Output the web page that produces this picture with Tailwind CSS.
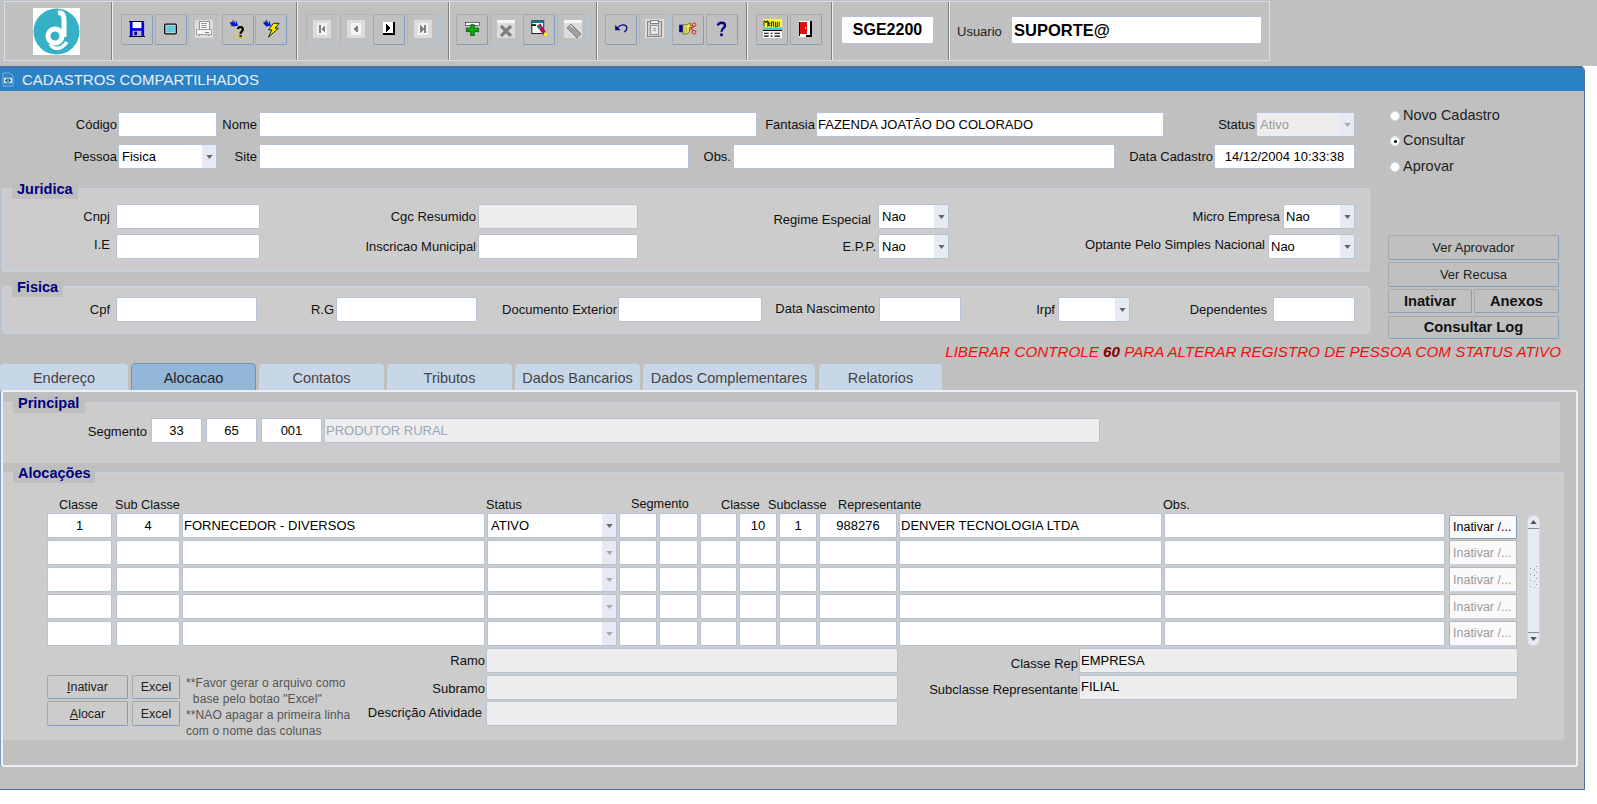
<!DOCTYPE html>
<html lang="pt">
<head>
<meta charset="utf-8">
<script src="https://cdn.jsdelivr.net/npm/@tailwindcss/browser@4"></script>
<title>SGE2200</title>
</head>
<body class="bg-white font-['Liberation_Sans',Arial,sans-serif] text-[13px] text-[#111]">
<div class="w-[1597px] h-[804px] overflow-hidden">

<!-- toolbar -->
<div class="h-[66px] bg-[#c0c0c0] pt-[1px] pl-[4px]">
  <div class="flex h-[60px] w-[1266px] border border-[#d3dfec]">
    <div class="w-[107px] shrink-0 border-r border-r-[#808080] shadow-[1px_0_0_#eeeeee] pl-[28px] pt-[6px]">
      <svg width="47" height="47" viewBox="0 0 47 47" class="block"><rect width="47" height="47" fill="#fff"/><circle cx="23.5" cy="23.5" r="23" fill="#35b0c4"/><path d="M25 5C30 4 31 8 31 12V29" fill="none" stroke="#fff" stroke-width="5"/><circle cx="22" cy="28" r="7" fill="none" stroke="#fff" stroke-width="5"/><path d="M17 36C21 43 29 41 34 34" fill="none" stroke="#fff" stroke-width="3.5"/></svg>
    </div>
    <div class="w-[185px] shrink-0 border-r border-r-[#808080] shadow-[1px_0_0_#eeeeee] pl-[9px] pt-[12px] flex gap-[1.5px]">
      <div class="w-[32px] h-[31px] pb-[2px] border border-[#a8a8a8] border-r-[#7f9dc0] border-b-[#7f9dc0] rounded-[2px] flex items-center justify-center">
        <svg width="16" height="16" viewBox="0 0 18 18"><path d="M1 1H16L17 2V17H1Z" fill="#0000e6"/><rect x="4" y="1" width="10" height="7" fill="#fff"/><rect x="4" y="11" width="10" height="6" fill="#b8b8b8"/><rect x="6" y="12" width="3" height="4" fill="#0000a0"/><path d="M0 0H17V1H0ZM0 17H18V18H0Z" fill="#000040"/></svg>
      </div>
      <div class="w-[32px] h-[31px] pb-[2px] border border-[#a8a8a8] border-r-[#7f9dc0] border-b-[#7f9dc0] rounded-[2px] flex items-center justify-center">
        <svg width="15" height="12" viewBox="0 0 16 14"><rect x="0.5" y="0.5" width="15" height="13" rx="2" fill="#000"/><rect x="2" y="2" width="12" height="10" fill="#dfe8e8"/><rect x="3" y="3" width="10" height="8" fill="#64c8d8"/></svg>
      </div>
      <div class="w-[32px] h-[31px] pb-[2px] border border-[#b4b4b4] border-r-[#b4c8de] border-b-[#b4c8de] rounded-[2px] flex items-center justify-center">
        <svg width="18" height="18" viewBox="0 0 20 20" shape-rendering="crispEdges"><rect width="20" height="20" fill="#dcdcdc"/><rect x="5" y="2" width="11" height="9" fill="#fff" stroke="#8c8c8c"/><path d="M7 4H13M7 6H13M7 8H13" stroke="#8c8c8c"/><rect x="2" y="11" width="16" height="5" fill="#f4f4f4" stroke="#9a9a9a"/><rect x="11" y="13" width="4" height="1" fill="#808080"/><path d="M4 17H6M14 17H16" stroke="#808080"/></svg>
      </div>
      <div class="w-[32px] h-[31px] pb-[2px] border border-[#a8a8a8] border-r-[#7f9dc0] border-b-[#7f9dc0] rounded-[2px] flex items-center justify-center">
        <svg width="18" height="18" viewBox="0 0 22 22"><path d="M1 3L9 1L11 7L5 8Z" fill="#0018e0"/><path d="M1 3L5 8L3 7Z" fill="#000"/><path d="M6 1L9 1L8 5Z" fill="#40d8e8"/><rect x="4" y="0" width="2" height="2" fill="#e02020"/><path d="M11 11C11 8 17 8 17 11C17 14 14 14 14 17" fill="none" stroke="#000" stroke-width="2.6"/><rect x="12.8" y="18.5" width="2.8" height="2.8" fill="#000"/><path d="M9 12V21M20 12V21M9 21H20M18 9H21" stroke="#f0e020" stroke-width="1.4" stroke-dasharray="1.2 1.2" fill="none"/></svg>
      </div>
      <div class="w-[32px] h-[31px] pb-[2px] border border-[#a8a8a8] border-r-[#7f9dc0] border-b-[#7f9dc0] rounded-[2px] flex items-center justify-center">
        <svg width="18" height="18" viewBox="0 0 22 22"><path d="M1 3L9 1L11 7L5 8Z" fill="#0018e0"/><path d="M6 1L9 1L8 5Z" fill="#40d8e8"/><rect x="4" y="0" width="2" height="2" fill="#a02020"/><path d="M14 4L21 4L16 10H20L8 21L12 12H8Z" fill="#ffe800" stroke="#000" stroke-width="1"/></svg>
      </div>
    </div>
    <div class="w-[152px] shrink-0 border-r border-r-[#808080] shadow-[1px_0_0_#eeeeee] pl-[9px] pt-[12px] flex gap-[1.5px]">
      <div class="w-[32px] h-[31px] pb-[2px] border border-[#b4b4b4] border-r-[#b4c8de] border-b-[#b4c8de] rounded-[2px] flex items-center justify-center">
        <svg width="18" height="18" viewBox="0 0 19 19" shape-rendering="crispEdges"><rect width="19" height="19" fill="#dcdcdc"/><rect x="4" y="3" width="11" height="13" fill="#f4f4f4"/><rect x="6" y="5" width="2" height="9" fill="#808080"/><path d="M13 5V14L9 9.5Z" fill="#808080"/></svg>
      </div>
      <div class="w-[32px] h-[31px] pb-[2px] border border-[#b4b4b4] border-r-[#b4c8de] border-b-[#b4c8de] rounded-[2px] flex items-center justify-center">
        <svg width="18" height="18" viewBox="0 0 19 19" shape-rendering="crispEdges"><rect width="19" height="19" fill="#dcdcdc"/><rect x="4" y="3" width="11" height="13" fill="#f4f4f4"/><path d="M12 5V14L7 9.5Z" fill="#808080"/></svg>
      </div>
      <div class="w-[32px] h-[31px] pb-[2px] border border-[#a8a8a8] border-r-[#7f9dc0] border-b-[#7f9dc0] rounded-[2px] flex items-center justify-center">
        <svg width="12" height="13" viewBox="0 0 12 13" shape-rendering="crispEdges"><rect width="12" height="13" fill="#fff"/><rect x="10" width="2" height="13" fill="#000"/><rect y="11" width="12" height="2" fill="#000"/><path d="M3 2V10L8 6Z" fill="#000"/></svg>
      </div>
      <div class="w-[32px] h-[31px] pb-[2px] border border-[#b4b4b4] border-r-[#b4c8de] border-b-[#b4c8de] rounded-[2px] flex items-center justify-center">
        <svg width="18" height="18" viewBox="0 0 19 19" shape-rendering="crispEdges"><rect width="19" height="19" fill="#dcdcdc"/><rect x="4" y="3" width="11" height="13" fill="#f4f4f4"/><path d="M6 5V14L11 9.5Z" fill="#808080"/><rect x="11" y="5" width="2" height="9" fill="#808080"/></svg>
      </div>
    </div>
    <div class="w-[148px] shrink-0 border-r border-r-[#808080] shadow-[1px_0_0_#eeeeee] pl-[7px] pt-[12px] flex gap-[1.5px]">
      <div class="w-[32px] h-[31px] pb-[2px] border border-[#a8a8a8] border-r-[#7f9dc0] border-b-[#7f9dc0] rounded-[2px] flex items-center justify-center">
        <svg width="15" height="14" viewBox="0 0 16 16"><rect y="0.5" width="16" height="3.5" fill="#fff" stroke="#000" stroke-width="0.6"/><path d="M6 3H10V7H15V11H10V16H6V11H1V7H6Z" fill="#00b000" stroke="#004000" stroke-width="0.8"/></svg>
      </div>
      <div class="w-[32px] h-[31px] pb-[2px] border border-[#b4b4b4] border-r-[#b4c8de] border-b-[#b4c8de] rounded-[2px] flex items-center justify-center">
        <svg width="18" height="18" viewBox="0 0 18 18"><rect width="18" height="18" fill="#dcdcdc"/><rect width="18" height="3" fill="#f6f6f6"/><path d="M4 6L14 16M14 6L4 16" stroke="#808080" stroke-width="3.2"/></svg>
      </div>
      <div class="w-[32px] h-[31px] pb-[2px] border border-[#a8a8a8] border-r-[#7f9dc0] border-b-[#7f9dc0] rounded-[2px] flex items-center justify-center">
        <svg width="17" height="17" viewBox="0 0 20 20"><rect x="1" y="1" width="14" height="15" fill="#fff" stroke="#000"/><rect x="1" y="1" width="14" height="2.5" fill="#008080"/><rect x="1" y="5" width="5" height="2" fill="#000"/><path d="M7 7L11 4L18 15L15 18Z" fill="#c00060"/><path d="M7 8L10 6L12 9L9 11Z" fill="#00a040"/><path d="M15 15L18 14L19 19L15 18Z" fill="#fff000"/></svg>
      </div>
      <div class="w-[32px] h-[31px] pb-[2px] border border-[#b4b4b4] border-r-[#b4c8de] border-b-[#b4c8de] rounded-[2px] flex items-center justify-center">
        <svg width="18" height="18" viewBox="0 0 18 18"><rect width="18" height="18" fill="#dcdcdc"/><rect width="18" height="3" fill="#f6f6f6"/><path d="M3 8L7 4L17 14L13 18Z" fill="#a0a0a0" stroke="#808080"/><path d="M6 5L9 8" stroke="#f0f0f0"/></svg>
      </div>
    </div>
    <div class="w-[150px] shrink-0 border-r border-r-[#808080] shadow-[1px_0_0_#eeeeee] pl-[8px] pt-[12px] flex gap-[1.5px]">
      <div class="w-[32px] h-[31px] pb-[2px] border border-[#a8a8a8] border-r-[#7f9dc0] border-b-[#7f9dc0] rounded-[2px] flex items-center justify-center">
        <svg width="13" height="9" viewBox="0 0 14 10"><path d="M0 1V7H6Z" fill="#000080"/><path d="M3 4C6 0 12 0 13 4C13 6 12 8 10 9" fill="none" stroke="#000080" stroke-width="1.3"/></svg>
      </div>
      <div class="w-[32px] h-[31px] pb-[2px] border border-[#b4b4b4] border-r-[#b4c8de] border-b-[#b4c8de] rounded-[2px] flex items-center justify-center">
        <svg width="19" height="19" viewBox="0 0 20 20" shape-rendering="crispEdges"><rect width="20" height="20" fill="#dcdcdc"/><rect x="3" y="3" width="14" height="15" fill="#d0d0d0" stroke="#808080"/><rect x="6" y="2" width="8" height="3" fill="#f0f0f0" stroke="#808080"/><rect x="6" y="7" width="8" height="9" fill="#e8e8e8" stroke="#909090"/><path d="M8 10H12M8 12H12" stroke="#909090"/></svg>
      </div>
      <div class="w-[32px] h-[31px] pb-[2px] border border-[#a8a8a8] border-r-[#7f9dc0] border-b-[#7f9dc0] rounded-[2px] flex items-center justify-center">
        <svg width="18" height="13" viewBox="0 0 19 14"><rect x="0" y="3" width="4" height="8" fill="#0000a0"/><path d="M4 3H9L11 1H12V4H15V6H11V11L8 13H4Z" fill="#f0f040" stroke="#404040" stroke-width="0.7"/><path d="M6 5V12M8 5V12" stroke="#808040" stroke-width="0.6"/><circle cx="16" cy="3" r="2" fill="none" stroke="#d02020"/><circle cx="16" cy="11" r="2" fill="none" stroke="#d02020"/><path d="M15 5L12 9M15 9L12 5" stroke="#d02020"/></svg>
      </div>
      <div class="w-[32px] h-[31px] pb-[2px] border border-[#a8a8a8] border-r-[#7f9dc0] border-b-[#7f9dc0] rounded-[2px] flex items-center justify-center">
        <svg width="11" height="16" viewBox="0 0 12 18"><path d="M2 5C2 1 10 1 10 5C10 8 6 8 6 12" fill="none" stroke="#000080" stroke-width="2.6"/><rect x="4.5" y="14" width="3" height="3" fill="#000080"/></svg>
      </div>
    </div>
    <div class="w-[85px] shrink-0 border-r border-r-[#808080] shadow-[1px_0_0_#eeeeee] pl-[9px] pt-[12px] flex gap-[1.5px]">
      <div class="w-[32px] h-[31px] pb-[2px] border border-[#a8a8a8] border-r-[#7f9dc0] border-b-[#7f9dc0] rounded-[2px] flex items-center justify-center">
        <svg width="19" height="19" viewBox="0 0 20 20"><rect width="20" height="9" fill="#ffff30"/><path d="M1 8V2H2L3 4L4 2H5V8M7 3H6V7H8M6 5H8M9 8V3H11V8M13 3V8H15V3M17 3V8" stroke="#000" fill="none" stroke-width="0.9"/><rect y="9" width="20" height="2" fill="#20d8e0"/><rect y="11" width="20" height="9" fill="#fff"/><path d="M0 12H20M1 15H6M8 15H10M12 15H18M1 18H6M8 18H10M12 18H18" stroke="#000" stroke-width="1.2"/></svg>
      </div>
      <div class="w-[32px] h-[31px] pb-[2px] border border-[#a8a8a8] border-r-[#7f9dc0] border-b-[#7f9dc0] rounded-[2px] flex items-center justify-center">
        <svg width="13" height="16" viewBox="0 0 14 18" shape-rendering="crispEdges"><rect width="14" height="18" fill="#fff"/><rect x="12" width="2" height="18" fill="#000"/><rect x="7" y="16" width="7" height="2" fill="#000"/><rect x="1" y="1" width="8" height="14" fill="#e01010"/><rect x="0" y="1" width="1" height="16" fill="#000"/><rect x="6" y="7" width="1" height="2" fill="#ffff00"/></svg>
      </div>
    </div>
    <div class="w-[117px] shrink-0 border-r border-r-[#808080] shadow-[1px_0_0_#eeeeee] pl-[9px] pt-[14px]">
      <div class="w-[93px] h-[28px] bg-white border border-[#b6c3d4] rounded-[2px] flex items-center justify-center font-bold text-[16px] text-black">SGE2200</div>
    </div>
    <div class="flex-1 pl-[8px] pt-[14px] flex items-start">
      <span class="w-[54px] shrink-0 pt-[8px] leading-[16px] text-[#222]">Usuario</span>
      <div class="w-[251px] h-[28px] bg-white border border-[#b6c3d4] rounded-[2px] flex items-center pl-[2px] font-bold text-[16.5px] text-black">SUPORTE@</div>
    </div>
  </div>
</div>

<!-- main window -->
<div class="w-[1585px] h-[724px] bg-[#c0c0c0] border-r border-b border-[#4f6f9f] rounded-tr-[5px] overflow-hidden">
  <div class="h-[25px] bg-[#2b82c4] border-t-2 border-t-[#4a6f9c] flex items-center">
    <svg width="13" height="17" viewBox="0 0 14 16" class="ml-[2px]"><path d="M1 1H8L12 4V15H1Z" fill="#2b82c4" stroke="#7db3de"/><rect x="2" y="6" width="9" height="6" fill="#d8e6f4"/><path d="M3 9L6 6V12ZM10 9L7 6V12Z" fill="#1f5f98"/></svg>
    <span class="ml-[7px] pt-[1px] text-[15px] text-[#e8eff7]">CADASTROS COMPARTILHADOS</span>
  </div>

  <div class="flex h-[250px]">
    <!-- left column -->
    <div class="w-[1372px] shrink-0 pt-[21px]">
      <div class="flex h-[25px] items-center">
        <span class="w-[117px] shrink-0 text-right">Código</span>
        <div class="ml-[1px] w-[99px] h-full bg-white border border-[#b6c3d4] rounded-[2px]"></div>
        <span class="w-[40px] shrink-0 text-right">Nome</span>
        <div class="ml-[2px] w-[498px] h-full bg-white border border-[#b6c3d4] rounded-[2px]"></div>
        <span class="w-[58px] shrink-0 text-right">Fantasia</span>
        <div class="ml-[1px] w-[348px] h-full bg-white border border-[#b6c3d4] rounded-[2px] flex items-center px-[1px] text-black">FAZENDA JOATÃO DO COLORADO</div>
        <span class="w-[91px] shrink-0 text-right">Status</span>
        <div class="ml-[1px] w-[99px] h-full bg-[#ededed] border border-[#b6c3d4] rounded-[2px] flex items-center pl-[3px] text-[#9a9a9a] relative">Ativo
          <span class="absolute right-0 top-0 bottom-0 w-[14px] bg-[#e6ebf3] flex items-center justify-center"><svg width="7" height="4" viewBox="0 0 8 5"><path d="M0 0H8L4 5Z" fill="#a8a8a8"/></svg></span>
        </div>
      </div>
      <div class="flex h-[25px] mt-[7px] items-center">
        <span class="w-[117px] shrink-0 text-right">Pessoa</span>
        <div class="ml-[1px] w-[99px] h-full bg-white border border-[#b6c3d4] rounded-[2px] flex items-center pl-[3px] text-black relative">Fisica
          <span class="absolute right-0 top-0 bottom-0 w-[14px] bg-[#e6ebf3] flex items-center justify-center"><svg width="7" height="4" viewBox="0 0 8 5"><path d="M0 0H8L4 5Z" fill="#666"/></svg></span>
        </div>
        <span class="w-[40px] shrink-0 text-right">Site</span>
        <div class="ml-[2px] w-[430px] h-full bg-white border border-[#b6c3d4] rounded-[2px]"></div>
        <span class="w-[42px] shrink-0 text-right">Obs.</span>
        <div class="ml-[2px] w-[382px] h-full bg-white border border-[#b6c3d4] rounded-[2px]"></div>
        <span class="w-[98px] shrink-0 text-right">Data Cadastro</span>
        <div class="ml-[1px] w-[141px] h-full bg-white border border-[#b6c3d4] rounded-[2px] flex items-center justify-center text-black">14/12/2004 10:33:38</div>
      </div>

      <!-- Juridica -->
      <div class="relative ml-[2px] mt-[19px] w-[1368px] h-[84px] bg-[#cccccc] border border-[#c6d5e6] rounded-[3px] pt-[15px]">
        <span class="absolute left-[9px] top-[-6px] h-[16px] w-[66px] bg-[#bebebe] pl-[5px] font-bold text-[14.5px] leading-[12px] text-[#000080]">Juridica</span>
        <div class="flex h-[25px] items-center">
          <span class="w-[107px] shrink-0 text-right">Cnpj</span>
          <div class="ml-[6px] w-[144px] h-full bg-white border border-[#b6c3d4] rounded-[2px]"></div>
          <span class="w-[216px] shrink-0 text-right">Cgc Resumido</span>
          <div class="ml-[2px] w-[160px] h-full bg-[#ededed] border border-[#b6c3d4] rounded-[2px]"></div>
          <span class="w-[233px] shrink-0 text-right mt-[6px]">Regime Especial</span>
          <div class="ml-[7px] w-[71px] h-full bg-white border border-[#b6c3d4] rounded-[2px] flex items-center pl-[3px] text-black relative">Nao
            <span class="absolute right-0 top-0 bottom-0 w-[14px] bg-[#e6ebf3] flex items-center justify-center"><svg width="7" height="4" viewBox="0 0 8 5"><path d="M0 0H8L4 5Z" fill="#666"/></svg></span>
          </div>
          <span class="w-[331px] shrink-0 text-right">Micro Empresa</span>
          <div class="ml-[3px] w-[72px] h-full bg-white border border-[#b6c3d4] rounded-[2px] flex items-center pl-[2px] text-black relative">Nao
            <span class="absolute right-0 top-0 bottom-0 w-[14px] bg-[#e6ebf3] flex items-center justify-center"><svg width="7" height="4" viewBox="0 0 8 5"><path d="M0 0H8L4 5Z" fill="#666"/></svg></span>
          </div>
        </div>
        <div class="flex h-[25px] mt-[5px] items-center">
          <span class="w-[107px] shrink-0 text-right -mt-[3px]">I.E</span>
          <div class="ml-[6px] w-[144px] h-full bg-white border border-[#b6c3d4] rounded-[2px]"></div>
          <span class="w-[216px] shrink-0 text-right">Inscricao Municipal</span>
          <div class="ml-[2px] w-[160px] h-full bg-white border border-[#b6c3d4] rounded-[2px]"></div>
          <span class="w-[238px] shrink-0 text-right">E.P.P.</span>
          <div class="ml-[2px] w-[71px] h-full bg-white border border-[#b6c3d4] rounded-[2px] flex items-center pl-[3px] text-black relative">Nao
            <span class="absolute right-0 top-0 bottom-0 w-[14px] bg-[#e6ebf3] flex items-center justify-center"><svg width="7" height="4" viewBox="0 0 8 5"><path d="M0 0H8L4 5Z" fill="#666"/></svg></span>
          </div>
          <span class="w-[316px] shrink-0 text-right -mt-[3px]">Optante Pelo Simples Nacional</span>
          <div class="ml-[3px] w-[87px] h-full bg-white border border-[#b6c3d4] rounded-[2px] flex items-center pl-[2px] text-black relative">Nao
            <span class="absolute right-0 top-0 bottom-0 w-[14px] bg-[#e6ebf3] flex items-center justify-center"><svg width="7" height="4" viewBox="0 0 8 5"><path d="M0 0H8L4 5Z" fill="#666"/></svg></span>
          </div>
        </div>
      </div>

      <!-- Fisica -->
      <div class="relative ml-[2px] mt-[14px] w-[1368px] h-[48px] bg-[#cccccc] border border-[#c6d5e6] rounded-[3px] pt-[10px]">
        <span class="absolute left-[9px] top-[-6px] h-[16px] w-[51px] bg-[#bebebe] pl-[5px] font-bold text-[14.5px] leading-[12px] text-[#000080]">Fisica</span>
        <div class="flex h-[25px] items-center">
          <span class="w-[107px] shrink-0 text-right">Cpf</span>
          <div class="ml-[6px] w-[141px] h-full bg-white border border-[#b6c3d4] rounded-[2px]"></div>
          <span class="w-[77px] shrink-0 text-right">R.G</span>
          <div class="ml-[2px] w-[141px] h-full bg-white border border-[#b6c3d4] rounded-[2px]"></div>
          <span class="w-[140px] shrink-0 text-right">Documento Exterior</span>
          <div class="ml-[1px] w-[144px] h-full bg-white border border-[#b6c3d4] rounded-[2px]"></div>
          <span class="w-[113px] shrink-0 text-right -mt-[2px]">Data Nascimento</span>
          <div class="ml-[4px] w-[82px] h-full bg-white border border-[#b6c3d4] rounded-[2px]"></div>
          <span class="w-[94px] shrink-0 text-right">Irpf</span>
          <div class="ml-[3px] w-[72px] h-full bg-white border border-[#b6c3d4] rounded-[2px] relative">
            <span class="absolute right-0 top-0 bottom-0 w-[14px] bg-[#e6ebf3] flex items-center justify-center"><svg width="7" height="4" viewBox="0 0 8 5"><path d="M0 0H8L4 5Z" fill="#666"/></svg></span>
          </div>
          <span class="w-[137px] shrink-0 text-right">Dependentes</span>
          <div class="ml-[6px] w-[82px] h-full bg-white border border-[#b6c3d4] rounded-[2px]"></div>
        </div>
      </div>
    </div>

    <!-- right column -->
    <div class="pl-[16px] pt-[12px] w-[190px]">
      <div class="pl-[2px] h-[25.5px] flex items-center gap-[3px] text-[14.5px] text-[#222]"><span class="w-[10px] h-[10px] rounded-full bg-white border border-[#d8dfe8]"></span>Novo Cadastro</div>
      <div class="pl-[2px] h-[25.5px] flex items-center gap-[3px] text-[14.5px] text-[#222]"><span class="w-[10px] h-[10px] rounded-full bg-white border border-[#d8dfe8] flex items-center justify-center"><span class="w-[3px] h-[3px] rounded-full bg-black"></span></span>Consultar</div>
      <div class="pl-[2px] h-[25.5px] flex items-center gap-[3px] text-[14.5px] text-[#222]"><span class="w-[10px] h-[10px] rounded-full bg-white border border-[#d8dfe8]"></span>Aprovar</div>
      <div class="mt-[55.5px] w-[171px] flex flex-col">
        <div class="h-[25px] pt-[1px] border border-[#a8a8a8] border-r-[#7f9dc0] border-b-[#7f9dc0] rounded-[2px] flex items-center justify-center text-[13px] text-[#222]">Ver Aprovador</div>
        <div class="mt-[2px] h-[25px] pt-[1px] border border-[#a8a8a8] border-r-[#7f9dc0] border-b-[#7f9dc0] rounded-[2px] flex items-center justify-center text-[13px] text-[#222]">Ver Recusa</div>
        <div class="mt-[2px] h-[24px] flex gap-[2px]">
          <div class="w-[84px] border border-[#a8a8a8] border-r-[#7f9dc0] border-b-[#7f9dc0] rounded-[2px] flex items-center justify-center font-bold text-[14.7px] text-[#111]">Inativar</div>
          <div class="w-[85px] border border-[#a8a8a8] border-r-[#7f9dc0] border-b-[#7f9dc0] rounded-[2px] flex items-center justify-center font-bold text-[14.7px] text-[#111]">Anexos</div>
        </div>
        <div class="mt-[3px] h-[23px] border border-[#a8a8a8] border-r-[#7f9dc0] border-b-[#7f9dc0] rounded-[2px] flex items-center justify-center font-bold text-[14.7px] text-[#111]">Consultar Log</div>
      </div>
    </div>
  </div>

  <!-- message -->
  <div class="h-[22px] w-[1561px] flex items-center justify-end italic text-[15.2px] text-[#f01010]">LIBERAR CONTROLE&nbsp;<b class="text-[#800000]">60</b>&nbsp;PARA ALTERAR REGISTRO DE PESSOA COM STATUS ATIVO</div>

  <!-- tabs -->
  <div class="flex h-[27px] items-end">
    <div class="w-[128px] h-[26px] bg-[#c8d7e8] rounded-t-[4px] flex items-center justify-center pt-[3px] text-[14.5px] text-[#444]">Endereço</div>
    <div class="ml-[3px] w-[125px] h-[27px] bg-[#92b7d9] border border-b-0 border-[#6f93b8] rounded-t-[5px] flex items-center justify-center pt-[3px] text-[14.5px] text-[#222]">Alocacao</div>
    <div class="ml-[3px] w-[125px] h-[26px] bg-[#c8d7e8] rounded-t-[4px] flex items-center justify-center pt-[3px] text-[14.5px] text-[#444]">Contatos</div>
    <div class="ml-[3px] w-[125px] h-[26px] bg-[#c8d7e8] rounded-t-[4px] flex items-center justify-center pt-[3px] text-[14.5px] text-[#444]">Tributos</div>
    <div class="ml-[3px] w-[125px] h-[26px] bg-[#c8d7e8] rounded-t-[4px] flex items-center justify-center pt-[3px] text-[14.5px] text-[#444]">Dados Bancarios</div>
    <div class="ml-[3px] w-[172px] h-[26px] bg-[#c8d7e8] rounded-t-[4px] flex items-center justify-center pt-[3px] text-[14.5px] text-[#444]">Dados Complementares</div>
    <div class="ml-[4px] w-[123px] h-[26px] bg-[#c8d7e8] rounded-t-[4px] flex items-center justify-center pt-[3px] text-[14.5px] text-[#444]">Relatorios</div>
  </div>

  <!-- tab content -->
  <div class="ml-[1px] w-[1577px] h-[377px] border-2 border-[#eaf0f7] rounded-[3px] shadow-[-1px_0_0_#7f9dc0] pt-[10px]">
    <div class="relative w-[1557px] h-[61px] bg-[#cccccc] border-t border-t-[#c6d5e6] pt-[15px]">
      <span class="absolute left-[10px] top-[-7px] h-[17px] w-[72px] bg-[#bebebe] pl-[5px] font-bold text-[14.5px] leading-[15px] text-[#000080]">Principal</span>
      <div class="flex h-[25px] items-center">
        <span class="w-[144px] shrink-0 text-right mt-[2px]">Segmento</span>
        <div class="ml-[4px] w-[51px] h-full bg-white border border-[#b6c3d4] rounded-[2px] flex items-center justify-center text-black">33</div>
        <div class="ml-[4px] w-[51px] h-full bg-white border border-[#b6c3d4] rounded-[2px] flex items-center justify-center text-black">65</div>
        <div class="ml-[4px] w-[61px] h-full bg-white border border-[#b6c3d4] rounded-[2px] flex items-center justify-center text-black">001</div>
        <div class="ml-[2px] w-[776px] h-full bg-[#ededed] border border-[#b6c3d4] rounded-[2px] flex items-center px-[1px] text-[#9aa8bb]">PRODUTOR RURAL</div>
      </div>
    </div>

    <div class="relative mt-[9px] w-[1561px] h-[268px] bg-[#cccccc] border-t border-t-[#c6d5e6] pt-[24px] pl-[44px]">
      <span class="absolute left-[10px] top-[-7px] h-[17px] w-[82px] bg-[#bebebe] pl-[5px] font-bold text-[14.5px] leading-[15px] text-[#000080]">Alocações</span>

      <div class="flex h-[16px] items-center pl-[12px] text-[12.7px] leading-none">
        <span class="w-[56px] shrink-0">Classe</span>
        <span class="w-[371px] shrink-0">Sub Classe</span>
        <span class="w-[145px] shrink-0">Status</span>
        <span class="w-[90px] shrink-0 -mt-[2px]">Segmento</span>
        <span class="w-[47px] shrink-0">Classe</span>
        <span class="w-[70px] shrink-0">Subclasse</span>
        <span class="w-[325px] shrink-0">Representante</span>
        <span>Obs.</span>
      </div>

      <div class="flex">
        <div class="grid grid-cols-[67px_64px_303px_130px_38px_39px_37px_38px_38px_78px_263px_283px_68px] auto-rows-[25px] gap-x-[2px] gap-y-[2px]">
          <div class="mr-[2px] bg-white border border-[#b6c3d4] rounded-[2px] flex items-center justify-center text-black">1</div>
          <div class="bg-white border border-[#b6c3d4] rounded-[2px] flex items-center justify-center text-black">4</div>
          <div class="bg-white border border-[#b6c3d4] rounded-[2px] flex items-center px-[1px] text-black">FORNECEDOR - DIVERSOS</div>
          <div class="bg-white border border-[#b6c3d4] rounded-[2px] flex items-center pl-[3px] text-black relative">ATIVO<span class="absolute right-0 top-0 bottom-0 w-[14px] bg-[#e6ebf3] flex items-center justify-center"><svg width="7" height="4" viewBox="0 0 8 5"><path d="M0 0H8L4 5Z" fill="#666"/></svg></span></div>
          <div class="bg-white border border-[#b6c3d4] rounded-[2px]"></div>
          <div class="bg-white border border-[#b6c3d4] rounded-[2px]"></div>
          <div class="bg-white border border-[#b6c3d4] rounded-[2px]"></div>
          <div class="bg-white border border-[#b6c3d4] rounded-[2px] flex items-center justify-center text-black">10</div>
          <div class="bg-white border border-[#b6c3d4] rounded-[2px] flex items-center justify-center text-black">1</div>
          <div class="bg-white border border-[#b6c3d4] rounded-[2px] flex items-center justify-center text-black">988276</div>
          <div class="bg-white border border-[#b6c3d4] rounded-[2px] flex items-center px-[1px] text-black">DENVER TECNOLOGIA LTDA</div>
          <div class="mr-[2px] bg-white border border-[#b6c3d4] rounded-[2px]"></div>
          <div class="mt-[2px] -mb-[1px] bg-[#fafafa] border border-[#a8a8a8] border-r-[#7f9dc0] border-b-[#7f9dc0] rounded-[2px] flex items-center pl-[3px] text-[12.5px] whitespace-nowrap text-black">Inativar /...</div>

          <div class="mr-[2px] bg-white border border-[#b6c3d4] rounded-[2px]"></div>
          <div class="bg-white border border-[#b6c3d4] rounded-[2px]"></div>
          <div class="bg-white border border-[#b6c3d4] rounded-[2px]"></div>
          <div class="bg-white border border-[#b6c3d4] rounded-[2px] relative"><span class="absolute right-0 top-0 bottom-0 w-[14px] bg-[#e6ebf3] flex items-center justify-center"><svg width="7" height="4" viewBox="0 0 8 5"><path d="M0 0H8L4 5Z" fill="#a8a8a8"/></svg></span></div>
          <div class="bg-white border border-[#b6c3d4] rounded-[2px]"></div>
          <div class="bg-white border border-[#b6c3d4] rounded-[2px]"></div>
          <div class="bg-white border border-[#b6c3d4] rounded-[2px]"></div>
          <div class="bg-white border border-[#b6c3d4] rounded-[2px]"></div>
          <div class="bg-white border border-[#b6c3d4] rounded-[2px]"></div>
          <div class="bg-white border border-[#b6c3d4] rounded-[2px]"></div>
          <div class="bg-white border border-[#b6c3d4] rounded-[2px]"></div>
          <div class="mr-[2px] bg-white border border-[#b6c3d4] rounded-[2px]"></div>
          <div class="bg-[#fafafa] border border-[#b4b4b4] border-b-[#c3d0e0] rounded-[2px] flex items-center pl-[3px] pt-[2px] text-[12.5px] whitespace-nowrap text-[#9a9a9a]">Inativar /...</div>

          <div class="mr-[2px] bg-white border border-[#b6c3d4] rounded-[2px]"></div>
          <div class="bg-white border border-[#b6c3d4] rounded-[2px]"></div>
          <div class="bg-white border border-[#b6c3d4] rounded-[2px]"></div>
          <div class="bg-white border border-[#b6c3d4] rounded-[2px] relative"><span class="absolute right-0 top-0 bottom-0 w-[14px] bg-[#e6ebf3] flex items-center justify-center"><svg width="7" height="4" viewBox="0 0 8 5"><path d="M0 0H8L4 5Z" fill="#a8a8a8"/></svg></span></div>
          <div class="bg-white border border-[#b6c3d4] rounded-[2px]"></div>
          <div class="bg-white border border-[#b6c3d4] rounded-[2px]"></div>
          <div class="bg-white border border-[#b6c3d4] rounded-[2px]"></div>
          <div class="bg-white border border-[#b6c3d4] rounded-[2px]"></div>
          <div class="bg-white border border-[#b6c3d4] rounded-[2px]"></div>
          <div class="bg-white border border-[#b6c3d4] rounded-[2px]"></div>
          <div class="bg-white border border-[#b6c3d4] rounded-[2px]"></div>
          <div class="mr-[2px] bg-white border border-[#b6c3d4] rounded-[2px]"></div>
          <div class="bg-[#fafafa] border border-[#b4b4b4] border-b-[#c3d0e0] rounded-[2px] flex items-center pl-[3px] pt-[2px] text-[12.5px] whitespace-nowrap text-[#9a9a9a]">Inativar /...</div>

          <div class="mr-[2px] bg-white border border-[#b6c3d4] rounded-[2px]"></div>
          <div class="bg-white border border-[#b6c3d4] rounded-[2px]"></div>
          <div class="bg-white border border-[#b6c3d4] rounded-[2px]"></div>
          <div class="bg-white border border-[#b6c3d4] rounded-[2px] relative"><span class="absolute right-0 top-0 bottom-0 w-[14px] bg-[#e6ebf3] flex items-center justify-center"><svg width="7" height="4" viewBox="0 0 8 5"><path d="M0 0H8L4 5Z" fill="#a8a8a8"/></svg></span></div>
          <div class="bg-white border border-[#b6c3d4] rounded-[2px]"></div>
          <div class="bg-white border border-[#b6c3d4] rounded-[2px]"></div>
          <div class="bg-white border border-[#b6c3d4] rounded-[2px]"></div>
          <div class="bg-white border border-[#b6c3d4] rounded-[2px]"></div>
          <div class="bg-white border border-[#b6c3d4] rounded-[2px]"></div>
          <div class="bg-white border border-[#b6c3d4] rounded-[2px]"></div>
          <div class="bg-white border border-[#b6c3d4] rounded-[2px]"></div>
          <div class="mr-[2px] bg-white border border-[#b6c3d4] rounded-[2px]"></div>
          <div class="bg-[#fafafa] border border-[#b4b4b4] border-b-[#c3d0e0] rounded-[2px] flex items-center pl-[3px] pt-[2px] text-[12.5px] whitespace-nowrap text-[#9a9a9a]">Inativar /...</div>

          <div class="mr-[2px] bg-white border border-[#b6c3d4] rounded-[2px]"></div>
          <div class="bg-white border border-[#b6c3d4] rounded-[2px]"></div>
          <div class="bg-white border border-[#b6c3d4] rounded-[2px]"></div>
          <div class="bg-white border border-[#b6c3d4] rounded-[2px] relative"><span class="absolute right-0 top-0 bottom-0 w-[14px] bg-[#e6ebf3] flex items-center justify-center"><svg width="7" height="4" viewBox="0 0 8 5"><path d="M0 0H8L4 5Z" fill="#a8a8a8"/></svg></span></div>
          <div class="bg-white border border-[#b6c3d4] rounded-[2px]"></div>
          <div class="bg-white border border-[#b6c3d4] rounded-[2px]"></div>
          <div class="bg-white border border-[#b6c3d4] rounded-[2px]"></div>
          <div class="bg-white border border-[#b6c3d4] rounded-[2px]"></div>
          <div class="bg-white border border-[#b6c3d4] rounded-[2px]"></div>
          <div class="bg-white border border-[#b6c3d4] rounded-[2px]"></div>
          <div class="bg-white border border-[#b6c3d4] rounded-[2px]"></div>
          <div class="mr-[2px] bg-white border border-[#b6c3d4] rounded-[2px]"></div>
          <div class="bg-[#fafafa] border border-[#b4b4b4] border-b-[#c3d0e0] rounded-[2px] flex items-center pl-[3px] text-[12.5px] whitespace-nowrap text-[#9a9a9a]">Inativar /...</div>
        </div>
        <!-- scrollbar -->
        <div class="ml-[10px] mt-[2px] w-[13px] h-[131px] bg-[#e6ebf3] rounded-[6px] border border-[#cfd8e4] flex flex-col items-center">
          <span class="h-[13px] w-full border-b border-b-[#7f8fa3] flex items-center justify-center"><svg width="7" height="4" viewBox="0 0 8 5"><path d="M0 5H8L4 0Z" fill="#555"/></svg></span>
          <svg width="9" height="26" viewBox="0 0 9 26" class="mt-[36px]"><path d="M1 3H2V4H1ZM7 1H8V2H7ZM5 4H6V5H5ZM1 9H2V10H1ZM7 7H8V8H7ZM5 10H6V11H5ZM1 15H2V16H1ZM7 13H8V14H7ZM5 16H6V17H5ZM1 21H2V22H1ZM7 19H8V20H7ZM5 22H6V23H5Z" fill="#8a96a6"/></svg>
          <span class="mt-auto h-[13px] w-full border-t border-t-[#7f8fa3] flex items-center justify-center"><svg width="7" height="4" viewBox="0 0 8 5"><path d="M0 0H8L4 5Z" fill="#555"/></svg></span>
        </div>
      </div>

      <!-- lower section -->
      <div class="flex mt-[2px]">
        <div class="w-[133px] shrink-0 pt-[27px]">
          <div class="flex h-[24px] gap-[4px]">
            <div class="w-[81px] pt-[1px] border border-[#a8a8a8] border-r-[#7f9dc0] border-b-[#7f9dc0] rounded-[2px] flex items-center justify-center text-[12.5px] text-[#222]"><span><u>I</u>nativar</span></div>
            <div class="w-[48px] pt-[1px] border border-[#a8a8a8] border-r-[#7f9dc0] border-b-[#7f9dc0] rounded-[2px] flex items-center justify-center text-[12.5px] text-[#222]">Excel</div>
          </div>
          <div class="flex h-[25px] gap-[4px] mt-[2px]">
            <div class="w-[81px] pt-[1px] border border-[#a8a8a8] border-r-[#7f9dc0] border-b-[#7f9dc0] rounded-[2px] flex items-center justify-center text-[12.5px] text-[#222]"><span><u>A</u>locar</span></div>
            <div class="w-[48px] pt-[1px] border border-[#a8a8a8] border-r-[#7f9dc0] border-b-[#7f9dc0] rounded-[2px] flex items-center justify-center text-[12.5px] text-[#222]">Excel</div>
          </div>
        </div>
        <div class="ml-[6px] w-[170px] shrink-0 pt-[27px] text-[12px] leading-[16px] text-[#555] tracking-[0.1px] whitespace-pre">**Favor gerar o arquivo como
  base pelo botao "Excel"
**NAO apagar a primeira linha
com o nome das colunas</div>
        <div class="grid grid-cols-[130px_412px_181px_439px] auto-rows-[25px] gap-y-[1.5px]">
          <span class="self-center text-right pr-[1px]">Ramo</span>
          <div class="bg-[#ededed] border border-[#b6c3d4] rounded-[2px]"></div>
          <span class="self-center text-right pr-[1px] mt-[6px]">Classe Rep</span>
          <div class="bg-[#ededed] border border-[#b6c3d4] rounded-[2px] flex items-center px-[1px] text-black">EMPRESA</div>
          <span class="self-center text-right pr-[1px] mt-[3px]">Subramo</span>
          <div class="bg-[#ededed] border border-[#b6c3d4] rounded-[2px]"></div>
          <span class="self-center text-right pr-[1px] mt-[6px]">Subclasse Representante</span>
          <div class="bg-[#ededed] border border-[#b6c3d4] rounded-[2px] flex items-center px-[1px] text-black">FILIAL</div>
          <span class="self-center text-right pr-[4px] -mt-[2px]">Descrição Atividade</span>
          <div class="bg-[#ededed] border border-[#b6c3d4] rounded-[2px]"></div>
        </div>
      </div>
    </div>
  </div>
</div>
</div>
</body>
</html>
